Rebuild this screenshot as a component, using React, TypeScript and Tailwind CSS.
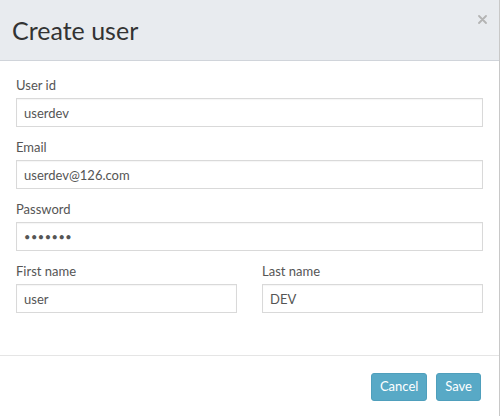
import React from 'react';

type FieldProps = {
  label: string;
  value: string;
  type?: string;
};

function Field({ label, value, type = 'text' }: FieldProps) {
  return (
    <div className="flex flex-col">
      <label className="mb-[4px] text-[13px] leading-[17px] text-[#555]">{label}</label>
      <input
        type={type}
        value={value}
        readOnly
        className={`h-[29px] w-full border border-[#d9d9d9] bg-white px-[7px] text-[#555] shadow-[inset_0_1px_1px_rgba(0,0,0,0.04)] outline-none ${
          type === 'password' ? 'text-[11px] tracking-[0.5px]' : 'text-[13px]'
        }`}
      />
    </div>
  );
}

export default function App() {
  return (
    <div className="flex h-[416px] w-[500px] flex-col border-r border-[#c8c8c8] bg-white font-['Lato',sans-serif]">
      <header className="flex h-[61px] shrink-0 items-center justify-between border-b border-[#d0d4da] bg-[#e8ebef] pl-[12px] pr-[12px]">
        <h1 className="text-[25px] font-normal leading-none text-[#333]">Create user</h1>
        <button className="mb-[22px] text-[#b4b4b4]" title="Close">
          <svg width="9" height="9" viewBox="0 0 9 9">
            <path d="M1 1 L8 8 M8 1 L1 8" stroke="currentColor" strokeWidth="1.8" strokeLinecap="round" />
          </svg>
        </button>
      </header>

      <div className="flex flex-1 flex-col gap-[12px] border-b border-[#e5e5e5] px-[16px] pb-[42px] pt-[16px]">
        <Field label="User id" value="userdev" />
        <Field label="Email" value="userdev@126.com" />
        <Field label="Password" value="1234567" type="password" />
        <div className="grid grid-cols-2 gap-[25px]">
          <Field label="First name" value="user" />
          <Field label="Last name" value="DEV" />
        </div>
      </div>

      <footer className="flex shrink-0 justify-end gap-[9px] pb-[16px] pl-[16px] pr-[18px] pt-[17px]">
        <button className="h-[28px] rounded-[3px] border border-[#4f9fbc] bg-[#58a9c6] px-[8px] text-[13px] text-white">
          Cancel
        </button>
        <button className="h-[28px] rounded-[3px] border border-[#4f9fbc] bg-[#58a9c6] px-[8px] text-[13px] text-white">
          Save
        </button>
      </footer>
    </div>
  );
}
